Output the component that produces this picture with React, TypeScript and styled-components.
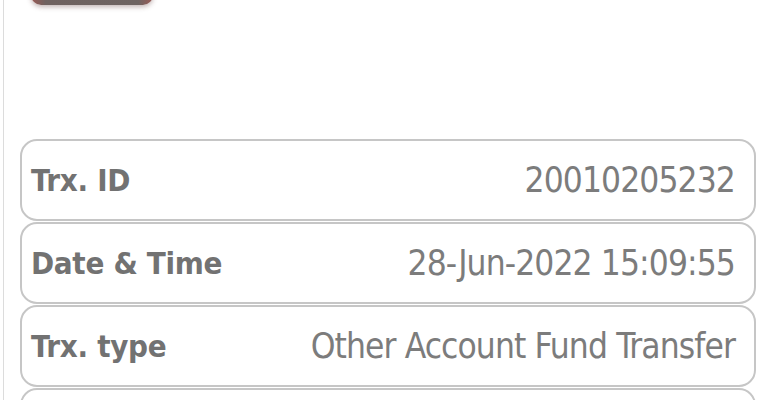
import React from 'react';
import styled, { createGlobalStyle } from 'styled-components';

const GlobalStyle = createGlobalStyle`
  html, body {
    margin: 0;
    padding: 0;
    background: #ffffff;
  }
  body {
    font-family: "DejaVu Sans Condensed", "Liberation Sans Narrow", "DejaVu Sans", sans-serif;
  }
`;

const Screen = styled.div`
  width: 773px;
  height: 400px;
  overflow: hidden;
  box-sizing: border-box;
  margin-left: 3px;
  border-left: 1px solid #dcdcdc;
  padding: 0 20px 0 16px;
`;

const TopButton = styled.div`
  width: 122px;
  height: 40px;
  margin: -35px 0 0 11px;
  border-radius: 10px;
  background: linear-gradient(90deg, #9a5a55 0%, #6f6260 12%, #6e6462 88%, #9a5a55 100%);
  box-shadow: 0 2px 5px rgba(80, 40, 40, 0.35);
`;

const DetailList = styled.div`
  display: flex;
  flex-direction: column;
  gap: 1px;
  margin-top: 134px;
`;

const Row = styled.div`
  display: flex;
  align-items: center;
  justify-content: space-between;
  height: 82px;
  flex-shrink: 0;
  box-sizing: border-box;
  padding: 0 19px 0 9px;
  border: 2px solid #c6c6c6;
  border-radius: 17px;
  background: #ffffff;
`;

const Label = styled.span`
  font-size: 31px;
  font-weight: 700;
  color: #727272;
  letter-spacing: -0.3px;
`;

const Value = styled.span`
  font-size: 35px;
  font-weight: 400;
  color: #7c7c7c;
  letter-spacing: -0.9px;
`;

const rows = [
  { label: 'Trx. ID', value: '20010205232' },
  { label: 'Date & Time', value: '28-Jun-2022 15:09:55' },
  { label: 'Trx. type', value: 'Other Account Fund Transfer' },
  { label: '', value: '' },
];

const App: React.FC = () => {
  return (
    <>
      <GlobalStyle />
      <Screen>
        <TopButton />
        <DetailList>
          {rows.map((r, i) => (
            <Row key={i}>
              <Label>{r.label}</Label>
              <Value>{r.value}</Value>
            </Row>
          ))}
        </DetailList>
      </Screen>
    </>
  );
};

export default App;
